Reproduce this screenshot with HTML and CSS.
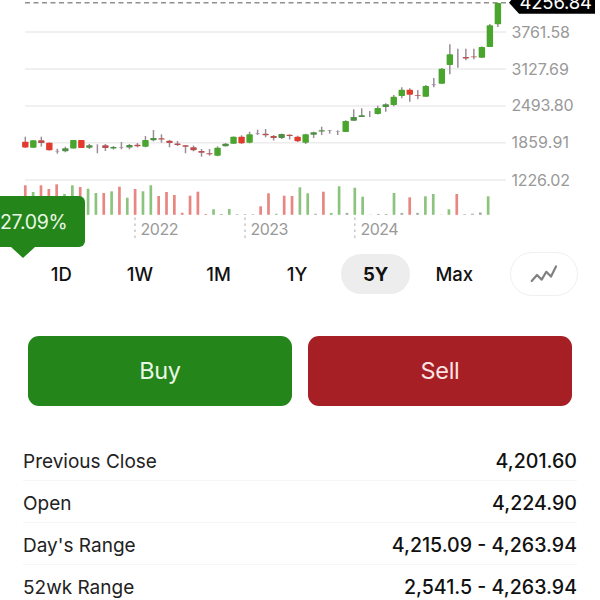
FILE: index.html
```html
<!DOCTYPE html>
<html lang="en">
<head>
    <meta charset="UTF-8">
    <meta name="viewport" content="width=device-width, initial-scale=1.0">
    <title>Stock Quote</title>
    <link rel="stylesheet" href="styles.css">
</head>
<body>
    <div class="quote">
        <div class="chart-wrap">
            <svg class="chart" width="600" height="248" viewBox="0 0 600 248">
                <g class="grid">
                    <path d="M25 31.9H506M25 69H506M25 105.9H506M25 142.8H506M25 180H506"/>
                </g>
                <path class="price-line" d="M25 2.7H508"/>
                <g id="candles"></g>
                <g id="volume"></g>
                <path class="year-line" d="M135 217.5V238M245 217.5V238M354.8 217.5V238"/>
                <g class="year-label">
                    <text x="140.5" y="235.3" textLength="38">2022</text>
                    <text x="250.5" y="235.3" textLength="38">2023</text>
                    <text x="360.5" y="235.3" textLength="38">2024</text>
                </g>
                <g class="price-label">
                    <text x="511.5" y="37.5" textLength="58.5">3761.58</text>
                    <text x="511.5" y="74.5" textLength="57.5">3127.69</text>
                    <text x="511.5" y="111.3" textLength="62">2493.80</text>
                    <text x="511.5" y="148.3" textLength="57.5">1859.91</text>
                    <text x="511.5" y="185.5" textLength="58.5">1226.02</text>
                </g>
                <path class="price-tag" d="M509 2.7L519 -9H595V13.8H519Z"/>
                <text class="price-now" x="519.5" y="9" textLength="72.5">4256.84</text>
            </svg>
            <div class="change-tip">27.09%</div>
        </div>

        <div class="ranges">
            <div class="range-list">
                <button class="range">1D</button>
                <button class="range">1W</button>
                <button class="range">1M</button>
                <button class="range">1Y</button>
                <button class="range active">5Y</button>
                <button class="range">Max</button>
            </div>
            <button class="chart-type" aria-label="Chart type">
                <svg width="28" height="20" viewBox="0 0 28 20">
                    <path d="M1.7 17L7 11L11.7 15.6L16.3 7.8L21 12.6L26 2.5"/>
                </svg>
            </button>
        </div>

        <div class="trade">
            <button class="btn buy">Buy</button>
            <button class="btn sell">Sell</button>
        </div>

        <div class="stats">
            <div class="stat"><span>Previous Close</span><b>4,201.60</b></div>
            <div class="stat"><span>Open</span><b>4,224.90</b></div>
            <div class="stat"><span>Day's Range</span><b>4,215.09 - 4,263.94</b></div>
            <div class="stat"><span>52wk Range</span><b>2,541.5 - 4,263.94</b></div>
        </div>
    </div>

    <script src="chart.js"></script>
</body>
</html>
```

FILE: styles.css
```css
* {
    box-sizing: border-box;
}
body {
    margin: 0;
    background-color: #fff;
    font-family: Inter, "Liberation Sans", sans-serif;
    color: #111;
}
button {
    font-family: inherit;
    border: none;
    padding: 0;
    cursor: pointer;
}
.quote {
    width: 600px;
    height: 600px;
    overflow: hidden;
}

/* chart */
.chart-wrap {
    position: relative;
    height: 252px;
}
.chart {
    display: block;
}
.grid path {
    stroke: #ececec;
    stroke-width: 1.5;
}
.price-line {
    stroke: #909090;
    stroke-width: 1.5;
    stroke-dasharray: 5 3.5;
}
.year-line {
    stroke: #c4c4c4;
    stroke-width: 1.4;
    stroke-dasharray: 2.5 3.5;
}
.year-label text,
.price-label text {
    font-size: 16px;
    fill: #999;
}
.price-tag {
    fill: #000;
}
.price-now {
    font-size: 18.5px;
    fill: #fff;
}
.up {
    fill: #4aa52e;
}
.down {
    fill: #e23b2e;
}
.flat {
    fill: #a08f9c;
}
.small-up {
    fill: #4f8f45;
}
.small-down {
    fill: #b9504f;
}
.wick {
    stroke: #9c8c97;
    stroke-width: 1.5;
}
.vol-up {
    stroke: #8cc47f;
}
.vol-down {
    stroke: #e88682;
}
.vol-none {
    stroke: #a3aba0;
}
.change-tip {
    position: absolute;
    left: 0;
    top: 195.5px;
    width: 85px;
    height: 51.5px;
    line-height: 52px;
    border-radius: 0 6px 6px 0;
    background-color: #23851a;
    color: #e9f8e4;
    font-size: 19.5px;
    letter-spacing: -0.3px;
}
.change-tip::after {
    content: "";
    position: absolute;
    left: 11px;
    top: 51px;
    border: 12px solid transparent;
    border-top: 11.5px solid #23851a;
    border-bottom: none;
}

/* range picker */
.ranges {
    display: flex;
    align-items: center;
    height: 44px;
    padding: 0 22px;
}
.range-list {
    display: grid;
    grid-template-columns: repeat(6, 78.6px);
    justify-items: center;
    width: 488px;
}
.range {
    width: 69px;
    height: 40px;
    border-radius: 20px;
    background: none;
    color: #111;
    font-size: 18.5px;
    font-weight: 500;
}
.range.active {
    background-color: #ededed;
    font-weight: 700;
}
.chart-type {
    display: flex;
    align-items: center;
    justify-content: center;
    width: 68px;
    height: 44px;
    border: 1.5px solid #f0f0f0;
    border-radius: 22px;
    background: none;
}
.chart-type path {
    fill: none;
    stroke: #808080;
    stroke-width: 2.2;
    stroke-linecap: round;
    stroke-linejoin: round;
}

/* buy / sell */
.trade {
    display: flex;
    gap: 16px;
    padding: 40px 28px 0;
}
.btn {
    flex: 1;
    height: 69.5px;
    border-radius: 11px;
    font-size: 23.5px;
    letter-spacing: -0.3px;
}
.buy {
    background-color: #23851a;
    color: #e9f8e4;
}
.sell {
    background-color: #a61f24;
    color: #fbe3e3;
}

/* key stats */
.stats {
    padding: 33.5px 23px 0;
}
.stat {
    display: flex;
    justify-content: space-between;
    align-items: center;
    height: 42.1px;
    padding-top: 3px;
    border-bottom: 1px solid #f6f6f6;
    font-size: 19px;
    color: #222;
}
.stat b {
    font-size: 19.6px;
    font-weight: 500;
    color: #111;
}
```

FILE: chart.js
```js
// [body top, body bottom, wick top, wick bottom, class]
const candles = [
    [141.7, 147.5, 136.7, 148, 'down'],
    [140.3, 147.7, 140, 148, 'up'],
    [140.3, 143, 136.7, 146.5, 'small-down'],
    [142.7, 150.3, 142.5, 150.5, 'down'],
    [150.8, 151.5, 148.7, 153.7, 'flat'],
    [148.3, 151.3, 146.7, 152.3, 'small-up'],
    [140, 148.5, 140, 148.5, 'up'],
    [140, 148, 140, 148, 'down'],
    [145.3, 147.7, 144, 149, 'small-up'],
    [148, 148.2, 144.3, 153.3, 'none'],
    [145.3, 148, 144, 151, 'small-down'],
    [147, 148.6, 146, 149.5, 'small-up'],
    [147.3, 148, 142, 149.3, 'flat'],
    [145, 147.5, 144, 149.3, 'small-up'],
    [144.7, 146.2, 143, 147.3, 'small-down'],
    [140, 146.7, 136, 147.3, 'up'],
    [138, 140.3, 130, 141.3, 'small-up'],
    [138.3, 139.5, 134.3, 142.7, 'small-down'],
    [140.7, 143, 140, 147.3, 'small-down'],
    [143.5, 145, 141, 146, 'small-down'],
    [145.3, 146.8, 145, 153.3, 'small-down'],
    [147.3, 150.3, 145.5, 151.3, 'small-down'],
    [151, 152.7, 149, 156.7, 'small-down'],
    [153.3, 154.3, 149, 155.7, 'small-down'],
    [147.7, 155.7, 146.3, 156.3, 'up'],
    [143.7, 146.3, 143, 146.5, 'small-up'],
    [136.7, 143.7, 136.5, 144, 'up'],
    [136.7, 143.3, 135.3, 144, 'down'],
    [134.3, 142.7, 131.7, 143.3, 'up'],
    [133, 133.7, 129.7, 135, 'flat'],
    [133.7, 135.3, 129, 137.3, 'small-down'],
    [136, 138, 135, 140.5, 'small-down'],
    [134, 138, 133.7, 139, 'small-up'],
    [134.7, 136, 134.5, 139.5, 'small-down'],
    [136.7, 141.3, 135.7, 142, 'down'],
    [134.3, 142.7, 133.7, 144, 'up'],
    [132.3, 134.7, 131.7, 138, 'small-up'],
    [130.3, 131.5, 126.7, 135, 'small-up'],
    [130.3, 131, 130, 133.7, 'flat'],
    [131, 131.5, 130.3, 135, 'flat'],
    [121, 132, 120.3, 132, 'up'],
    [117, 120.7, 109.3, 121, 'small-up'],
    [115.3, 117, 108.3, 117, 'small-up'],
    [114, 114.2, 111, 117, 'none'],
    [108, 114, 105.7, 114.5, 'up'],
    [104.3, 107, 103.3, 111.7, 'small-up'],
    [96.7, 105, 95, 106.3, 'up'],
    [89.7, 96, 87.3, 98.3, 'up'],
    [89.7, 94.7, 88.3, 101.7, 'down'],
    [95.2, 96, 90, 99.3, 'small-down'],
    [86, 96.7, 85, 97, 'up'],
    [84.3, 85.2, 78, 87.3, 'flat'],
    [68.7, 83.7, 68, 84, 'up'],
    [54.3, 65, 44.3, 74.3, 'up'],
    [58, 58.2, 48.7, 67.7, 'none'],
    [57, 58.4, 48.7, 60.3, 'small-down'],
    [56.5, 57.2, 48.7, 59.3, 'small-down'],
    [47, 57.7, 46.5, 58, 'up'],
    [25.3, 47, 24, 47, 'up'],
    [3, 24.3, 2.7, 27, 'up']
];

// [top of bar, class]
const volume = [
    [185.3, 'down'], [192, 'up'], [185.3, 'down'], [189, 'down'], [184.3, 'down'], [194, 'up'],
    [185.3, 'up'], [187, 'down'], [188.7, 'up'], [193, 'up'], [193, 'down'], [191.3, 'up'],
    [186.7, 'down'], [197.7, 'up'], [189, 'down'], [191.3, 'up'], [185.3, 'up'], [196, 'down'],
    [192, 'down'], [195, 'down'], [212.8, 'down'], [195.7, 'down'], [191.7, 'down'], [214, 'down'],
    [209.3, 'up'], [214, 'none'], [209, 'up'], [214.2, 'none'], [214.2, 'none'], [214.2, 'none'],
    [206.3, 'down'], [193.3, 'down'], [213.8, 'up'], [195.7, 'down'], [196, 'down'], [187.3, 'up'],
    [193.3, 'up'], [213.8, 'none'], [191.7, 'down'], [213, 'up'], [186.3, 'up'], [212.9, 'none'],
    [187.7, 'up'], [196.7, 'up'], [214.6, 'none'], [214, 'none'], [214, 'none'], [193, 'up'],
    [212.9, 'none'], [197.3, 'down'], [212.9, 'none'], [196.3, 'up'], [194, 'up'], [214.6, 'none'],
    [209.3, 'up'], [194, 'down'], [214.2, 'none'], [213.7, 'none'], [212.5, 'none'], [196.3, 'up']
];

let out = '';
candles.forEach(([top, bottom, high, low, cls], i) => {
    const x = 25.3 + i * 8.01;
    out += `<path class="wick" d="M${x} ${high}V${low}"/>`;
    if (cls !== 'none') {
        const w = cls === 'flat' ? 4.5 : 6.4;
        out += `<rect class="${cls}" x="${x - w / 2}" y="${top}" width="${w}" height="${bottom - top}" rx="0.8"/>`;
    }
});
document.getElementById('candles').innerHTML = out;

out = '';
volume.forEach(([top, cls], i) => {
    const x = 25.3 + i * 7.845;
    out += `<path class="vol-${cls}" stroke-width="2.7" d="M${x} ${top}V214.8"/>`;
});
document.getElementById('volume').innerHTML = out;
```
